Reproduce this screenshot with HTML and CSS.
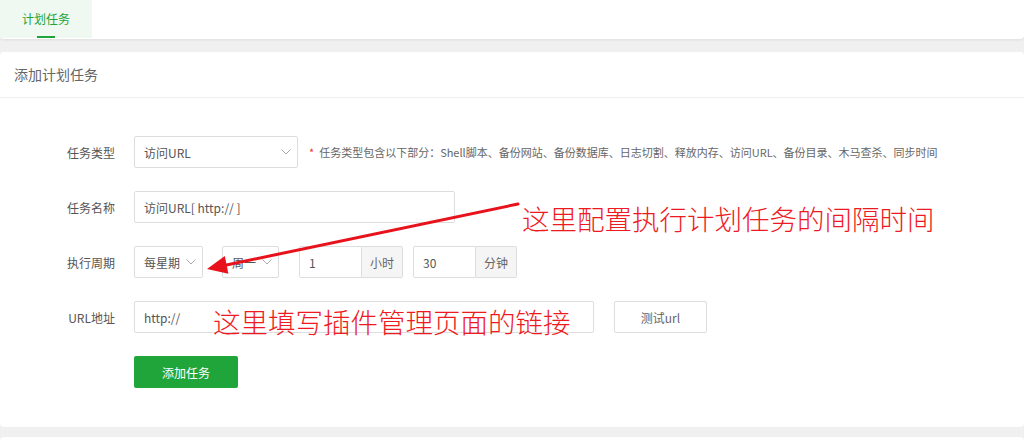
FILE: index.html
```html
<!DOCTYPE html>
<html lang="zh-CN">
<head>
<meta charset="utf-8">
<title>计划任务</title>
<link rel="stylesheet" href="styles.css">
</head>
<body>
<div class="topbar">
  <div class="tab active">计划任务</div>
</div>
<div class="card">
  <div class="card-header">添加计划任务</div>
  <div class="form">
    <div class="row">
      <label class="label">任务类型</label>
      <div class="select w164"><span>访问URL</span><svg class="chev" width="10" height="6" viewBox="0 0 10 6"><path d="M0.5 0.5 L5 5 L9.5 0.5" fill="none" stroke="#aaa" stroke-width="1"/></svg></div>
      <div class="note"><span class="star">*</span>任务类型包含以下部分：Shell脚本、备份网站、备份数据库、日志切割、释放内存、访问URL、备份目录、木马查杀、同步时间</div>
    </div>
    <div class="row">
      <label class="label">任务名称</label>
      <div class="input w321">访问URL[ http:// ]</div>
    </div>
    <div class="row">
      <label class="label">执行周期</label>
      <div class="select w69 mr19"><span>每星期</span><svg class="chev" width="10" height="6" viewBox="0 0 10 6"><path d="M0.5 0.5 L5 5 L9.5 0.5" fill="none" stroke="#aaa" stroke-width="1"/></svg></div>
      <div class="select w57 mr20"><span>周一</span><svg class="chev" width="10" height="6" viewBox="0 0 10 6"><path d="M0.5 0.5 L5 5 L9.5 0.5" fill="none" stroke="#aaa" stroke-width="1"/></svg></div>
      <div class="group mr10"><div class="input w63 gi">1</div><div class="addon">小时</div></div>
      <div class="group"><div class="input w63 gi">30</div><div class="addon">分钟</div></div>
    </div>
    <div class="row">
      <label class="label">URL地址</label>
      <div class="input w460">http://</div>
      <div class="btn-test">测试url</div>
    </div>
    <div class="row submit-row">
      <div class="btn-primary">添加任务</div>
    </div>
  </div>
</div>
<div class="card next"></div>

<div class="anno anno1">这里配置执行计划任务的间隔时间</div>
<div class="anno anno2">这里填写插件管理页面的链接</div>
<svg class="arrow" width="1024" height="442" viewBox="0 0 1024 442">
  <line x1="518" y1="204" x2="224" y2="265.5" stroke="#e8121c" stroke-width="3" stroke-linecap="round"/>
  <polygon points="207,269 224.8,256.1 228.4,273.7" fill="#e8121c"/>
</svg>
</body>
</html>
```
FILE: styles.css
```css
* { box-sizing: border-box; }
html, body { margin: 0; padding: 0; }
body {
  background: #f0f0f0;
  font-family: "Noto Sans CJK SC", "Microsoft YaHei", sans-serif;
  color: #555;
  width: 1024px;
  height: 442px;
  overflow: hidden;
  position: relative;
}
.topbar {
  height: 39px;
  background: #fff;
  box-shadow: 0 1px 3px rgba(0,0,0,0.08);
  border-radius: 0 0 4px 4px;
  display: flex;
}
.tab {
  width: 92px;
  height: 38px;
  line-height: 38px;
  text-align: center;
  font-size: 12px;
  color: #20a53a;
  background: #eff8f1;
  position: relative;
}
.tab.active::after {
  content: "";
  position: absolute;
  left: 37px;
  bottom: 0;
  width: 18px;
  height: 2px;
  background: #20a53a;
}
.card {
  margin-top: 13px;
  background: #fff;
  border-radius: 4px;
  height: 375px;
}
.card.next { margin-top: 10px; height: 20px; }
.card-header {
  height: 46px;
  line-height: 45px;
  padding-left: 14px;
  font-size: 14px;
  color: #666;
  border-bottom: 1px solid #efefef;
}
.form { padding-top: 38px; }
.row {
  display: flex;
  align-items: center;
  height: 32px;
  margin-bottom: 23px;
}
.label {
  width: 115px;
  margin-right: 19px;
  text-align: right;
  font-size: 12px;
  color: #555;
}
.select, .input {
  height: 32px;
  border: 1px solid #ddd;
  border-radius: 2px;
  font-size: 12px;
  color: #555;
  display: flex;
  align-items: center;
  padding-left: 9px;
  background: #fff;
}
.select { justify-content: space-between; padding-right: 6px; }
.chev { flex: none; }
.w164 { width: 164px; }
.w321 { width: 321px; }
.w69 { width: 69px; }
.w57 { width: 57px; }
.w63 { width: 63px; }
.w460 { width: 460px; }
.mr19 { margin-right: 19px; }
.mr20 { margin-right: 20px; }
.mr10 { margin-right: 10px; }
.note {
  margin-left: 11px;
  font-size: 11px;
  color: #666;
  white-space: nowrap;
}
.star { color: #e33; margin-right: 5px; }
.group { display: flex; }
.gi { border-radius: 2px 0 0 2px; }
.addon {
  width: 41px;
  height: 32px;
  border: 1px solid #ddd;
  border-left: none;
  background: #f5f5f5;
  font-size: 12px;
  color: #666;
  display: flex;
  align-items: center;
  justify-content: center;
  border-radius: 0 2px 2px 0;
}
.btn-test {
  margin-left: 20px;
  width: 93px;
  height: 32px;
  border: 1px solid #ddd;
  border-radius: 2px;
  font-size: 12px;
  color: #666;
  display: flex;
  align-items: center;
  justify-content: center;
}
.submit-row { padding-left: 134px; }
.btn-primary {
  width: 104px;
  height: 32px;
  background: #20a53a;
  color: #fff;
  font-size: 12px;
  border-radius: 2px;
  display: flex;
  align-items: center;
  justify-content: center;
}
.anno {
  position: absolute;
  color: #ee1a22;
  font-size: 27.5px;
  font-weight: 300;
  line-height: 1;
  white-space: nowrap;
  font-family: "Noto Sans CJK SC", sans-serif;
}
.anno1 { left: 522px; top: 205px; }
.anno2 { left: 213px; top: 308px; }
.arrow { position: absolute; left: 0; top: 0; pointer-events: none; }
```
